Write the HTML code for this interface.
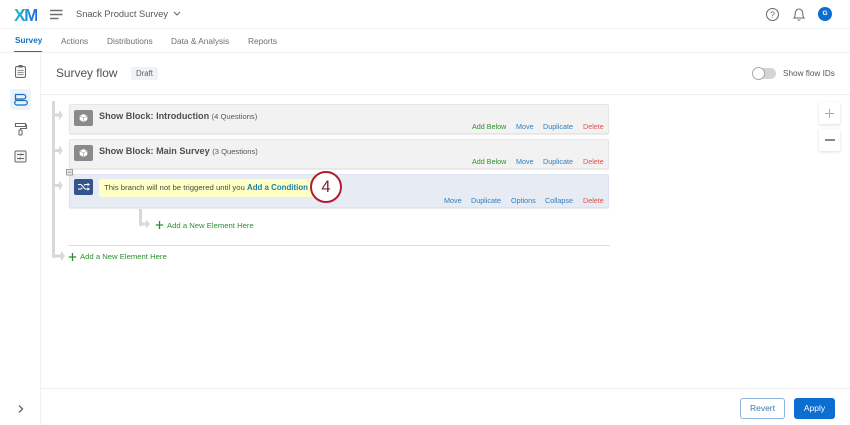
<!DOCTYPE html>
<html><head><meta charset="utf-8">
<style>
html,body{margin:0;padding:0;background:#fff}
#p{position:relative;width:850px;height:425px;overflow:hidden;background:#fff;font-family:"Liberation Sans",sans-serif;color:#444}
.a{position:absolute;white-space:nowrap}
.tab{top:35px;font-size:8.3px;color:#6b6f75;line-height:12px}
.blk{position:absolute;left:69px;width:538px;background:#f2f2f2;border:1px solid #e6e6e6;border-radius:2px;box-shadow:0 1px 1px #e8e8e8}
.ic{position:absolute;left:74px;width:19px;height:16px;background:#8a8a8a;border-radius:2px}
.tt{font-size:9.1px;font-weight:bold;color:#4f4f4f;line-height:12px}
.tt span{font-weight:normal;font-size:7.6px;color:#555}
.l{font-size:7.2px;line-height:10px}
.g{color:#2f8f2f}.b{color:#2f7fbd}.r{color:#d9534f}
.bar{position:absolute;background:#d8d8d8}
.gr{font-size:7.7px;color:#2f8f2f;line-height:12px}
</style></head><body><div id="p">

<div class="a" style="left:14px;top:5px;font-size:17.5px;font-weight:bold;line-height:20px;letter-spacing:-1.6px;background:linear-gradient(100deg,#21c4b8 0%,#2299dc 50%,#1b5fd8 100%);-webkit-background-clip:text;background-clip:text;color:transparent">XM</div>
<svg class="a" style="left:50px;top:9px" width="13" height="11"><path d="M0 1.500h12.500M0 5.500h12.500M0 9.500h8.500" stroke="#6e6e6e" stroke-width="1.400" fill="none"/></svg>
<div class="a" style="left:76px;top:8px;font-size:9.3px;line-height:13px;color:#55595e">Snack Product Survey</div>
<svg class="a" style="left:173px;top:11px" width="8" height="6"><path d="M1 1l3 3 3-3" stroke="#666" stroke-width="1" fill="none"/></svg>

<svg class="a" style="left:765px;top:7px" width="15" height="15"><circle cx="7.500" cy="7.500" r="6" stroke="#666" fill="none"/><text x="7.500" y="10.500" text-anchor="middle" font-size="8.500" fill="#666" font-family="Liberation Sans">?</text></svg>
<svg class="a" style="left:792px;top:7px" width="14" height="15"><path d="M2 11c1.200-1 1.200-2.500 1.200-4.500C3.200 3.800 5 2 7 2s3.800 1.800 3.800 4.500c0 2 0 3.500 1.200 4.500zM5.700 12.500c.4 1 2.200 1 2.600 0" stroke="#666" fill="none"/></svg>
<div class="a" style="left:818px;top:7px;width:14px;height:14px;border-radius:50%;background:#0b6ed0;color:#fff;font-size:6.500px;font-weight:bold;text-align:center;line-height:14px">G</div>

<div class="a" style="left:0;top:28px;width:850px;height:1px;background:#f3f3f3"></div>
<div class="a tab" style="left:15px;color:#1a6fc0;font-weight:bold;font-size:8.200px">Survey</div>
<div class="a tab" style="left:61px">Actions</div>
<div class="a tab" style="left:107px">Distributions</div>
<div class="a tab" style="left:171px">Data &amp; Analysis</div>
<div class="a tab" style="left:248px">Reports</div>
<div class="a" style="left:14px;top:51px;width:28px;height:2px;background:#1a6fc0"></div>
<div class="a" style="left:0;top:52px;width:850px;height:1px;background:#f0f0f0"></div>

<div class="a" style="left:40px;top:53px;width:1px;height:372px;background:#f0f0f0"></div>
<svg class="a" style="left:14px;top:64px" width="13" height="15"><rect x="1.500" y="2.500" width="10" height="11" rx="1.500" stroke="#666" fill="#f4f4f4"/><rect x="4.500" y="1" width="4" height="2.500" fill="#666"/><path d="M3.500 6.500h6M3.500 8.500h6M3.500 10.500h6" stroke="#777" stroke-width=".8"/></svg>
<div class="a" style="left:10px;top:89px;width:21px;height:21px;background:#eaf2fa;border-radius:3px"></div>
<svg class="a" style="left:13px;top:93px" width="15" height="14"><path d="M2.500 1.500h8a2 2 0 010 4.500h-8zM2.500 1.500v4.500M2.500 6v1M4 7.500h8a1.800 1.800 0 010 4.500H4a1.800 1.800 0 010-4.500z" stroke="#1a6fc0" stroke-width="1.300" fill="none"/></svg>
<svg class="a" style="left:14px;top:121px" width="14" height="15"><path d="M1.500 2.500h10v3h-10zM11.500 4h1v3.500H6.500v2" stroke="#666" stroke-width="1.100" fill="none"/><rect x="5" y="9" width="3" height="5" rx=".8" stroke="#666" fill="none"/></svg>
<svg class="a" style="left:14px;top:150px" width="13" height="13"><rect x="1" y="1" width="11" height="11" rx="1.200" stroke="#666" fill="#f4f4f4"/><path d="M3 4.500h7M3 8.500h7" stroke="#666"/><path d="M7 3.500v2M6 7.500v2" stroke="#666" stroke-width="1.200"/></svg>
<svg class="a" style="left:17px;top:404px" width="8" height="10"><path d="M2 1.500l3.500 3.500-3.500 3.500" stroke="#666" stroke-width="1.300" fill="none"/></svg>

<div class="a" style="left:56px;top:66px;font-size:11.900px;line-height:15px;color:#4d5156">Survey flow</div>
<div class="a" style="left:131px;top:67px;width:27px;height:13px;background:#f0f3f6;border-radius:2px;text-align:center;font-size:7.800px;line-height:13px;color:#5d6166">Draft</div>
<div class="a" style="left:752px;top:68px;width:24px;height:11px;background:#d4d4d4;border-radius:6px"></div>
<div class="a" style="left:752px;top:67px;width:11px;height:11px;background:#fff;border:1px solid #aaa;border-radius:50%"></div>
<div class="a" style="left:783px;top:68px;font-size:8.200px;line-height:12px;color:#55595e">Show flow IDs</div>
<div class="a" style="left:41px;top:94px;width:809px;height:1px;background:#eee"></div>

<div class="a" style="left:819px;top:102px;width:21px;height:22px;background:#fff;box-shadow:0 1px 3px #ddd;border-radius:2px"></div>
<svg class="a" style="left:824px;top:108px" width="11" height="11"><path d="M5.500 1v9M1 5.500h9" stroke="#aaa" stroke-width="1"/></svg>
<div class="a" style="left:819px;top:129px;width:21px;height:22px;background:#fff;box-shadow:0 1px 3px #ddd;border-radius:2px"></div>
<div class="a" style="left:825px;top:139px;width:10px;height:2px;background:#888"></div>

<div class="bar" style="left:52px;top:101px;width:3px;height:157px"></div>
<svg class="a" style="left:55px;top:108px" width="10" height="90"><g fill="#d8d8d8"><path d="M0 5.500h4V2l4 5-4 5V8.500H0z"/><path d="M0 41h4v-3.500l4 5-4 5V44H0z"/><path d="M0 76h4v-3.500l4 5-4 5V79H0z"/></g></svg>
<svg class="a" style="left:52px;top:250px" width="14" height="12"><path d="M0 4.500h9V.5l4 5.500-4 5.500V7.500H0z" fill="#d8d8d8"/></svg>

<div class="blk" style="top:104px;height:28px"></div>
<div class="ic" style="top:110px"></div>
<svg class="a" style="left:79px;top:113px" width="9" height="10"><path d="M4.500 1l3.800 2v4l-3.800 2-3.800-2V3z" fill="#fff"/><path d="M.7 3l3.800 2 3.800-2M4.500 5v4" stroke="#8a8a8a" stroke-width=".5" fill="none"/></svg>
<div class="a tt" style="left:99px;top:110px">Show Block: Introduction <span>(4 Questions)</span></div>
<div class="a l g" style="left:472px;top:122px">Add Below</div>
<div class="a l b" style="left:516px;top:122px">Move</div>
<div class="a l b" style="left:543px;top:122px">Duplicate</div>
<div class="a l r" style="left:583px;top:122px">Delete</div>

<div class="blk" style="top:139px;height:28px"></div>
<div class="ic" style="top:145px"></div>
<svg class="a" style="left:79px;top:148px" width="9" height="10"><path d="M4.500 1l3.800 2v4l-3.800 2-3.800-2V3z" fill="#fff"/><path d="M.7 3l3.800 2 3.800-2M4.500 5v4" stroke="#8a8a8a" stroke-width=".5" fill="none"/></svg>
<div class="a tt" style="left:99px;top:145px">Show Block: Main Survey <span>(3 Questions)</span></div>
<div class="a l g" style="left:472px;top:157px">Add Below</div>
<div class="a l b" style="left:516px;top:157px">Move</div>
<div class="a l b" style="left:543px;top:157px">Duplicate</div>
<div class="a l r" style="left:583px;top:157px">Delete</div>

<div class="blk" style="top:174px;height:32px;background:#e6ebf4;border-color:#dde3ee"></div>
<svg class="a" style="left:66px;top:169px" width="8" height="7"><rect x=".5" y=".5" width="6" height="5.500" fill="#eee" stroke="#888" stroke-width=".8"/><path d="M1.500 3.200h4" stroke="#888" stroke-width=".8"/></svg>
<div class="ic" style="top:179px;background:#33548c"></div>
<svg class="a" style="left:77px;top:182px" width="14" height="10"><path d="M1 2.500h3l4 4.500h4M1 7h3l1.200-1.300M7 3.500l1-1h4" stroke="#fff" stroke-width="1.100" fill="none"/><path d="M10.500 .8l2.500 1.700-2.500 1.700zM10.500 5.300l2.500 1.700-2.500 1.700z" fill="#fff"/></svg>
<div class="a" style="left:99px;top:179px;width:222px;height:18px;background:#ffffc8;border-radius:3px"></div>
<div class="a" style="left:104px;top:182px;font-size:7.750px;line-height:12px;color:#4a4a3c">This branch will not be triggered until you <b style="color:#1a7fa8;font-size:7.900px">Add a Condition</b></div>
<div class="a" style="left:310px;top:171px;width:28px;height:28px;border:2.500px solid #b01c2e;border-radius:50%;background:#fff;text-align:center;font-size:16.500px;line-height:28px;color:#7e2630">4</div>
<div class="a l b" style="left:444px;top:196px">Move</div>
<div class="a l b" style="left:471px;top:196px">Duplicate</div>
<div class="a l b" style="left:511px;top:196px">Options</div>
<div class="a l b" style="left:545px;top:196px">Collapse</div>
<div class="a l r" style="left:583px;top:196px">Delete</div>

<div class="bar" style="left:139px;top:209px;width:3px;height:17px"></div>
<svg class="a" style="left:139px;top:219px" width="13" height="11"><path d="M0 3.500h7V.5l4 4.500-4 4.500V6.500H0z" fill="#d8d8d8"/></svg>
<svg class="a" style="left:155px;top:220px" width="9" height="10"><path d="M4.500 1v8M.8 5h7.400" stroke="#2f8f2f" stroke-width="1.300"/></svg>
<div class="a gr" style="left:167px;top:220px">Add a New Element Here</div>
<div class="a" style="left:68px;top:245px;width:542px;height:1px;background:#ddd"></div>
<svg class="a" style="left:68px;top:252px" width="9" height="10"><path d="M4.500 1v8M.8 5h7.400" stroke="#2f8f2f" stroke-width="1.300"/></svg>
<div class="a gr" style="left:80px;top:251px">Add a New Element Here</div>

<div class="a" style="left:41px;top:388px;width:809px;height:1px;background:#eee"></div>
<div class="a" style="left:740px;top:398px;width:43px;height:19px;border:1px solid #8fb4dc;border-radius:3px;text-align:center;font-size:8.500px;line-height:19px;color:#3f78b5">Revert</div>
<div class="a" style="left:794px;top:398px;width:41px;height:21px;background:#0b6ed0;border-radius:3px;text-align:center;font-size:8.500px;line-height:21px;color:#fff">Apply</div>
</div></body></html>
